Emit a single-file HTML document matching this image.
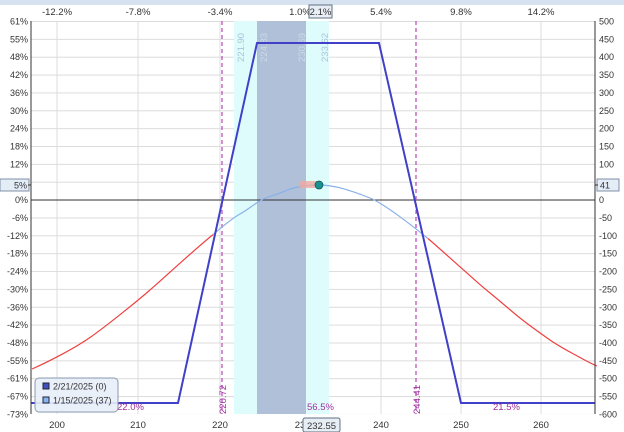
<!DOCTYPE html>
<html><head><meta charset="utf-8"><style>
html,body{margin:0;padding:0;background:#fff}
svg{display:block;font-family:"Liberation Sans",sans-serif}
</style></head><body>
<svg width="624" height="432" viewBox="0 0 624 432" xmlns="http://www.w3.org/2000/svg">
<defs>
<pattern id="hg" x="0" y="21" width="10" height="17.86" patternUnits="userSpaceOnUse">
<line x1="0" y1="0.5" x2="10" y2="0.5" stroke="#dcdcdc" stroke-width="1"/>
</pattern>
</defs>
<rect x="0" y="0" width="624" height="5" fill="#d6e2f0"/>
<rect x="31" y="21" width="564" height="393" fill="url(#hg)"/>
<g stroke="#dcdcdc" stroke-width="1">
<line x1="57" y1="21" x2="57" y2="414"/><line x1="138" y1="21" x2="138" y2="414"/>
<line x1="220" y1="21" x2="220" y2="414"/><line x1="300" y1="21" x2="300" y2="414"/>
<line x1="381" y1="21" x2="381" y2="414"/><line x1="461" y1="21" x2="461" y2="414"/>
<line x1="541" y1="21" x2="541" y2="414"/>
</g>
<rect x="234" y="21" width="95" height="393" fill="#dffcfc"/>
<rect x="257" y="21" width="49" height="393" fill="#afc0d8"/>
<line x1="31" y1="200" x2="595" y2="200" stroke="#333" stroke-width="1"/>
<line x1="222" y1="21" x2="222" y2="414" stroke="#c050c0" stroke-width="1.3" stroke-dasharray="4,3"/>
<line x1="416" y1="21" x2="416" y2="414" stroke="#c050c0" stroke-width="1.3" stroke-dasharray="4,3"/>
<g fill="#a8c4da" font-size="9.5">
<text transform="translate(244,62) rotate(-90)">221.90</text>
<text transform="translate(267,62) rotate(-90)" fill="#cdd9e8">224.83</text>
<text transform="translate(305,62) rotate(-90)" fill="#cdd9e8">230.69</text>
<text transform="translate(328,62) rotate(-90)">233.62</text>
</g>
<path fill="none" stroke="#f04040" stroke-width="1.2" d="M32,369 C50,361 75,348 90,337.5 S135,303 150,290 S195,249 213,234.6"/>
<path fill="none" stroke="#8ab0e8" stroke-width="1.2" d="M213,234.6 C222,227 231,219 240,214 S260,199 270,196.4 S288,189 295,187.6 S310,185 318,185 S333,186 340,187.8 S360,194 370,198 S392,211 400,216.8 S420,232 428,238.5"/>
<path fill="none" stroke="#f04040" stroke-width="1.2" d="M428,238.5 C439,248 450,258 460,266.8 S480,285 490,293 S510,310 520,318 S540,333 550,340 S570,352 580,357.5 S592,364 597,366"/>
<polyline fill="none" stroke="#4040c8" stroke-width="2" points="31,403 178,403 257,43 379,43 461,403 595,403"/>
<rect x="300" y="181" width="18" height="7" fill="#f0a8a0" opacity="0.8"/>
<circle cx="319" cy="185" r="4" fill="#1a9090" stroke="#0a5050" stroke-width="0.7"/>
<line x1="31" y1="21" x2="31" y2="414" stroke="#333"/>
<line x1="595" y1="21" x2="595" y2="414" stroke="#333"/>
<g font-size="9.5" fill="#333" text-anchor="middle">
<text x="57" y="15">-12.2%</text><text x="138" y="15">-7.8%</text><text x="220" y="15">-3.4%</text>
<text x="300" y="15">1.0%</text><text x="381" y="15">5.4%</text><text x="461" y="15">9.8%</text><text x="541" y="15">14.2%</text>
</g>
<rect x="309" y="5" width="23" height="13" fill="#e8eef6" stroke="#607080"/>
<text x="320.5" y="15" font-size="9.5" fill="#333" text-anchor="middle">2.1%</text>
<g font-size="9" fill="#333" text-anchor="end">
<text x="28" y="24.5">61%</text><text x="28" y="42.4">55%</text><text x="28" y="60.2">48%</text>
<text x="28" y="78.1">42%</text><text x="28" y="95.9">36%</text><text x="28" y="113.8">30%</text>
<text x="28" y="131.7">24%</text><text x="28" y="149.5">18%</text><text x="28" y="167.4">12%</text>
<text x="28" y="203.1">0%</text><text x="28" y="221">-6%</text><text x="28" y="238.8">-12%</text>
<text x="28" y="256.7">-18%</text><text x="28" y="274.5">-24%</text><text x="28" y="292.4">-30%</text>
<text x="28" y="310.3">-36%</text><text x="28" y="328.1">-42%</text><text x="28" y="346">-48%</text>
<text x="28" y="363.8">-55%</text><text x="28" y="381.7">-61%</text><text x="28" y="399.6">-67%</text>
<text x="28" y="417.4">-73%</text>
</g>
<rect x="0" y="179" width="29" height="12" fill="#e4ecf6" stroke="#8090a8"/>
<text x="27" y="188.5" font-size="9" fill="#333" text-anchor="end">5%</text>
<g font-size="9" fill="#333">
<text x="599" y="24.5">500</text><text x="599" y="42.4">450</text><text x="599" y="60.2">400</text>
<text x="599" y="78.1">350</text><text x="599" y="95.9">300</text><text x="599" y="113.8">250</text>
<text x="599" y="131.7">200</text><text x="599" y="149.5">150</text><text x="599" y="167.4">100</text>
<text x="599" y="203.1">0</text><text x="599" y="221">-50</text><text x="599" y="238.8">-100</text>
<text x="599" y="256.7">-150</text><text x="599" y="274.5">-200</text><text x="599" y="292.4">-250</text>
<text x="599" y="310.3">-300</text><text x="599" y="328.1">-350</text><text x="599" y="346">-400</text>
<text x="599" y="363.8">-450</text><text x="599" y="381.7">-500</text><text x="599" y="399.6">-550</text>
<text x="599" y="417.4">-600</text>
</g>
<rect x="597" y="179" width="22" height="12" fill="#e4ecf6" stroke="#8090a8"/>
<text x="600" y="188.5" font-size="9" fill="#333">41</text>
<g stroke="#333"><line x1="28" y1="185" x2="31" y2="185"/><line x1="595" y1="185" x2="598" y2="185"/></g>
<g fill="#a030a0" font-size="9.5">
<text transform="translate(226,414) rotate(-90)">220.72</text>
<text transform="translate(420,414) rotate(-90)">244.41</text>
<text x="307" y="410">56.5%</text>
<text x="117" y="410">22.0%</text>
<text x="493" y="410">21.5%</text>
</g>
<rect x="35" y="378" width="83" height="34" rx="4" fill="#e8eef8" fill-opacity="0.9" stroke="#8a9ab0"/>
<rect x="43" y="383" width="6" height="6" fill="#4050c0" stroke="#223"/>
<text x="53" y="389.5" font-size="9" fill="#333">2/21/2025 (0)</text>
<rect x="43" y="397" width="6" height="6" fill="#88b4f0" stroke="#223"/>
<text x="53" y="403.5" font-size="9" fill="#333">1/15/2025 (37)</text>
<g font-size="9.5" fill="#333" text-anchor="middle">
<text x="57" y="428">200</text><text x="138" y="428">210</text><text x="220" y="428">220</text>
<text x="300" y="428">23</text><text x="381" y="428">240</text><text x="461" y="428">250</text><text x="541" y="428">260</text>
</g>
<rect x="303" y="418" width="37" height="14" rx="2" fill="#e8eef6" stroke="#607080"/>
<text x="321.5" y="429" font-size="9.5" fill="#333" text-anchor="middle">232.55</text>
</svg>
</body></html>
